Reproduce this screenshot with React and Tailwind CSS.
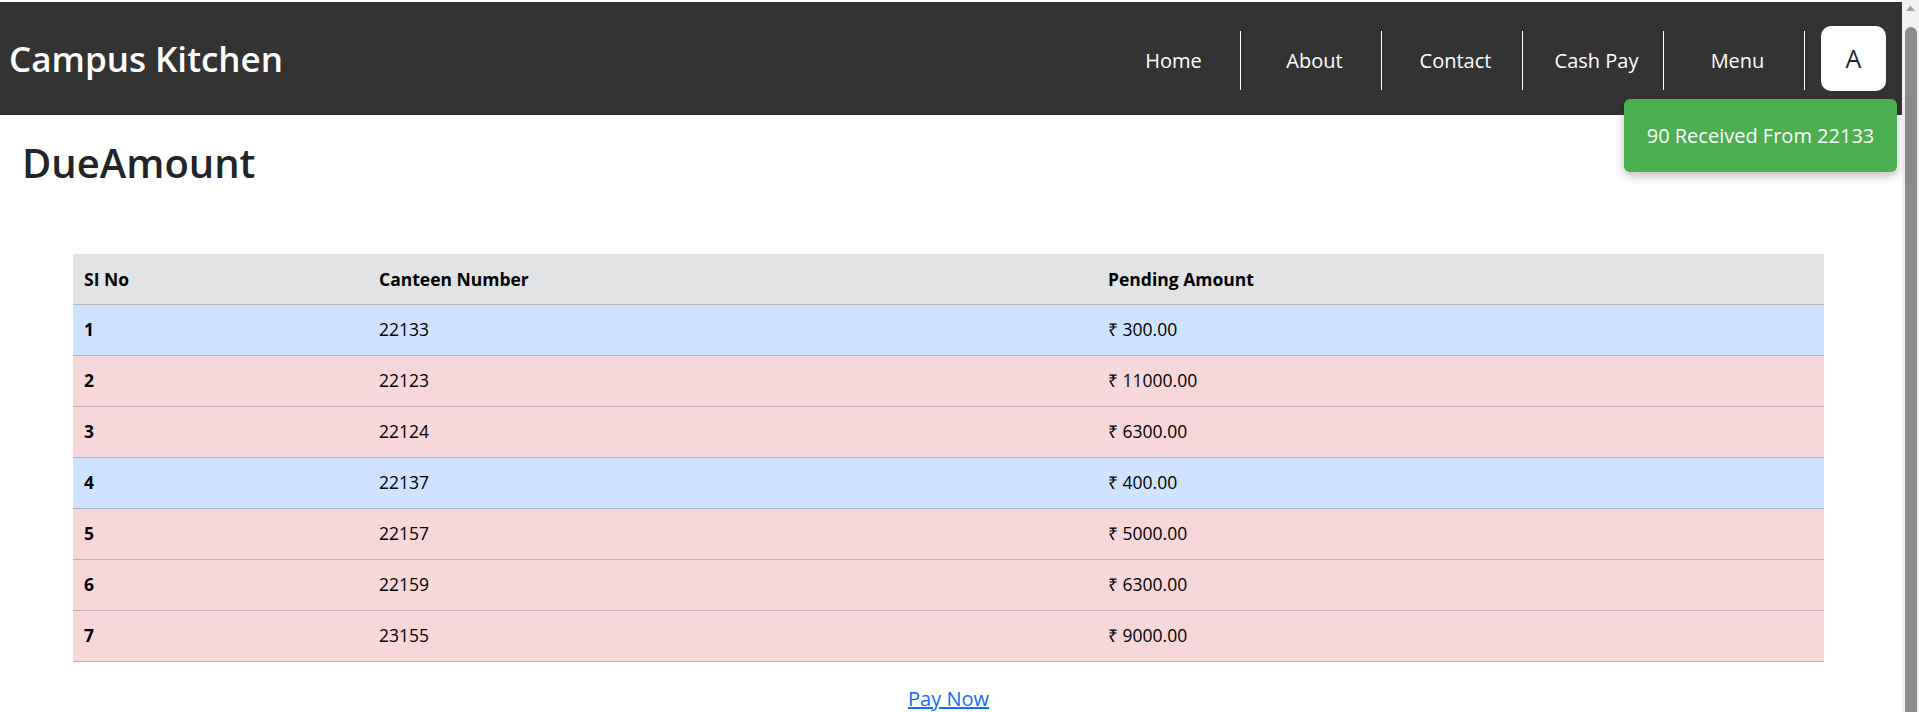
import React from "react";

const rows = [
  { n: 1, c: "22133", a: "₹ 300.00", t: "blue" },
  { n: 2, c: "22123", a: "₹ 11000.00", t: "red" },
  { n: 3, c: "22124", a: "₹ 6300.00", t: "red" },
  { n: 4, c: "22137", a: "₹ 400.00", t: "blue" },
  { n: 5, c: "22157", a: "₹ 5000.00", t: "red" },
  { n: 6, c: "22159", a: "₹ 6300.00", t: "red" },
  { n: 7, c: "23155", a: "₹ 9000.00", t: "red" },
];

const navItems = ["Home", "About", "Contact", "Cash Pay", "Menu"];

export default function App() {
  return (
    <div className="flex h-[712px] overflow-hidden bg-white font-['Open_Sans',sans-serif] text-[#212529]">
      <div className="relative min-w-0 flex-1 pt-[2px]">
        <header className="flex h-[113px] items-center justify-between bg-[#333333] pl-[9px] pr-[16px]">
          <div className="text-[35px] font-semibold leading-[1.2] text-white">Campus Kitchen</div>
          <div className="flex items-center">
            <ul className="mt-[4px] flex items-center">
              {navItems.map((item) => (
                <li
                  key={item}
                  className="flex h-[59px] w-[141px] items-center justify-center border-r border-white pl-[7px] text-[20px] leading-[1.5] text-white"
                >
                  {item}
                </li>
              ))}
            </ul>
            <div className="ml-[16px] flex h-[65px] w-[65px] items-center justify-center rounded-[10px] bg-white text-[25px] text-[#212529]">
              A
            </div>
          </div>
        </header>

        <div className="absolute right-[5px] top-[99px] flex h-[73px] w-[273px] items-center justify-center rounded-[6px] bg-[#4caf50] text-[20px] text-white shadow-[0_4px_10px_rgba(0,0,0,0.25)]">
          90 Received From 22133
        </div>

        <main className="pb-[40px]">
          <h2 className="mt-[24px] pl-[22px] text-[40px] font-semibold leading-[1.2] text-[#212529]">DueAmount</h2>

          <div className="mt-[67px] pl-[73px] pr-[78px]">
            <table className="w-full table-fixed text-left text-[17.5px] text-black">
              <thead>
                <tr className="border-b border-[#b5b6b7] bg-[#e2e3e5]">
                  <th className="h-[50px] w-[295px] px-[11px] font-bold">SI No</th>
                  <th className="h-[50px] w-[729px] px-[11px] font-bold">Canteen Number</th>
                  <th className="h-[50px] px-[11px] font-bold">Pending Amount</th>
                </tr>
              </thead>
              <tbody>
                {rows.map((r) => (
                  <tr
                    key={r.n}
                    className={
                      r.t === "blue"
                        ? "border-b border-[#a6b5cc] bg-[#cfe2ff]"
                        : "border-b border-[#c6acae] bg-[#f8d7da]"
                    }
                  >
                    <td className="h-[51px] px-[11px] font-bold">{r.n}</td>
                    <td className="h-[51px] px-[11px]">{r.c}</td>
                    <td className="h-[51px] px-[11px]">{r.a}</td>
                  </tr>
                ))}
              </tbody>
            </table>
            <div className="mt-[22px] text-center">
              <a href="#" className="text-[20px] leading-[1.5] text-[#0d6efd] underline">
                Pay Now
              </a>
            </div>
          </div>
        </main>
      </div>

      <div className="flex w-[17px] shrink-0 flex-col items-center bg-[#f1f1f1]">
        <svg width="17" height="17" viewBox="0 0 17 17" className="shrink-0">
          <path d="M4 11 L8.5 5.5 L13 11 Z" fill="#a3a3a3" />
        </svg>
        <div className="mt-[10px] h-[700px] w-[12px] shrink-0 rounded-[6px] bg-[#8b8b8b]" />
      </div>
    </div>
  );
}
